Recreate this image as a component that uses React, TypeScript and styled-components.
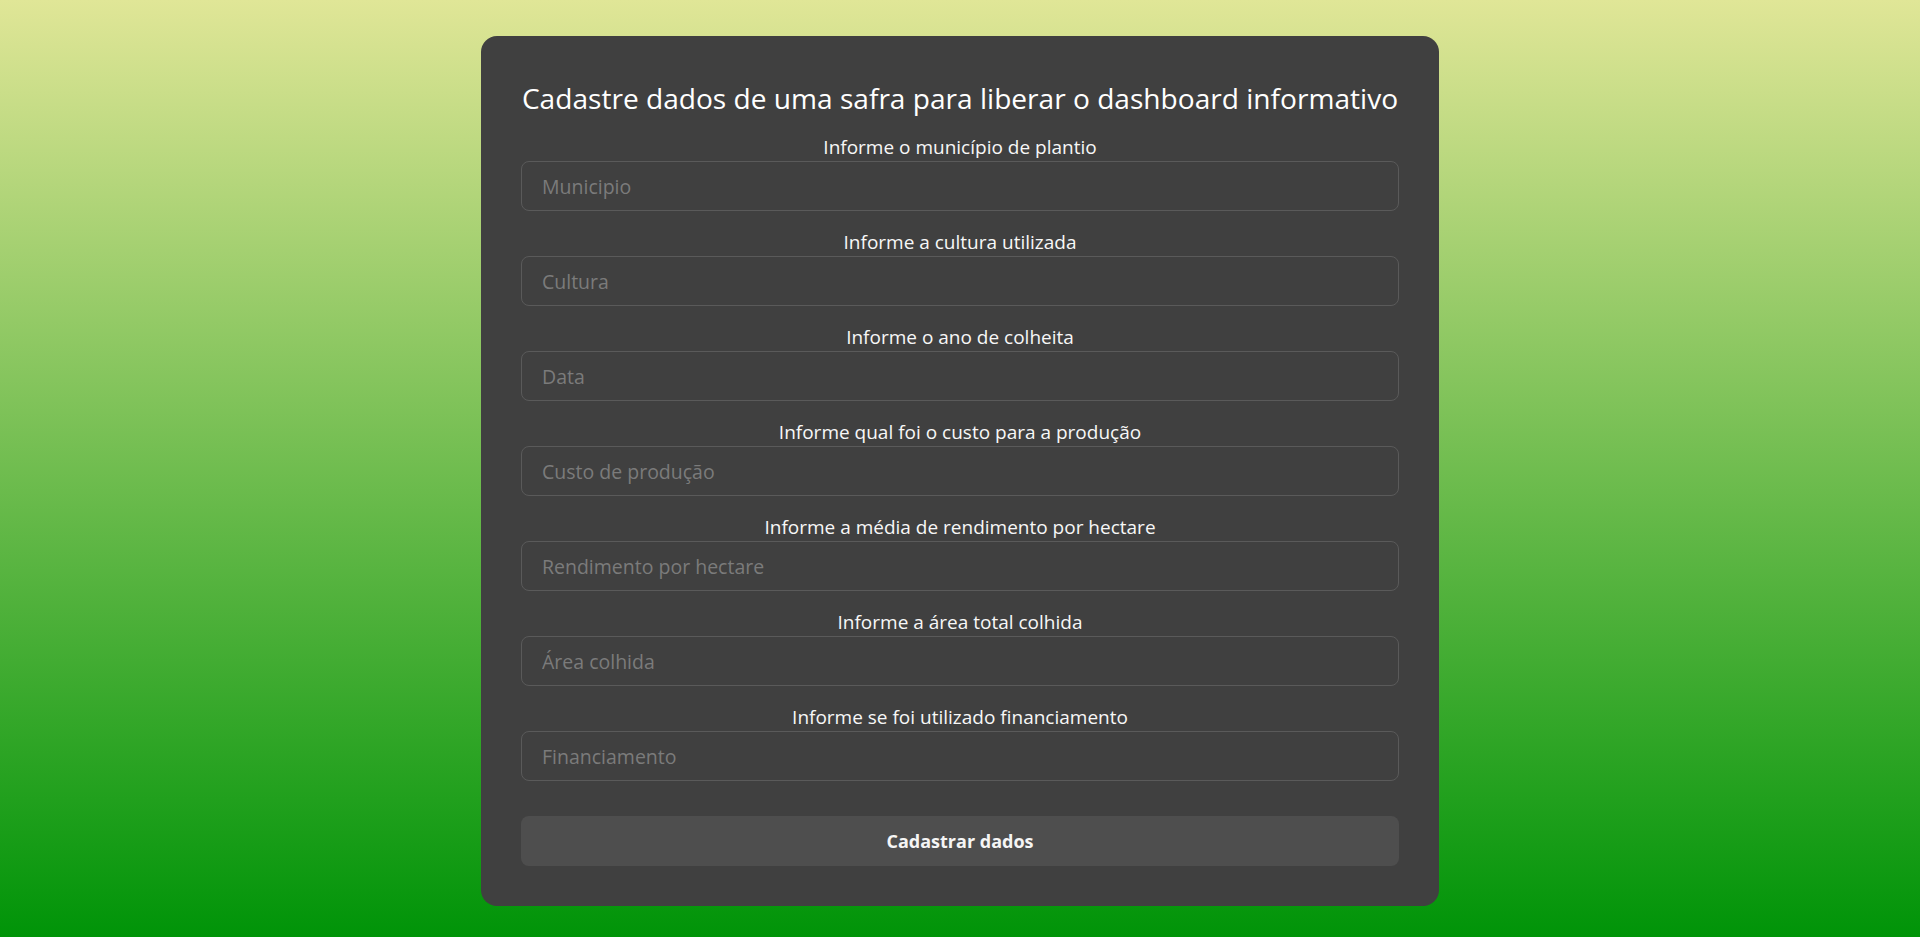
import React from "react";
import styled, { createGlobalStyle } from "styled-components";

const GlobalStyle = createGlobalStyle`
  html, body {
    margin: 0;
    padding: 0;
  }
  body {
    min-height: 100vh;
    background: linear-gradient(to bottom, #e0e697 0%, #009408 100%);
    background-attachment: fixed;
    font-family: "Open Sans", "Noto Sans", "Liberation Sans", sans-serif;
  }
  * { box-sizing: border-box; }
`;

const Page = styled.main`
  min-height: 100vh;
  display: flex;
  justify-content: center;
  align-items: flex-start;
  padding-top: 36px;
`;

const Card = styled.form`
  width: 958px;
  padding: 40px;
  background: #404040;
  border-radius: 16px;
  display: flex;
  flex-direction: column;
`;

const Title = styled.h1`
  margin: 2px 0 17px;
  font-size: 28.1px;
  line-height: 40px;
  font-weight: 400;
  color: #ffffff;
  text-align: center;
  white-space: nowrap;
`;

const FieldList = styled.div`
  display: flex;
  flex-direction: column;
  gap: 19px;
`;

const Field = styled.label`
  display: flex;
  flex-direction: column;
`;

const LabelText = styled.span`
  display: block;
  margin-bottom: 2px;
  font-size: 19px;
  line-height: 24px;
  color: #f7f7f7;
  text-align: center;
`;

const Input = styled.input`
  width: 100%;
  height: 50px;
  padding: 0 20px;
  border: 1px solid #5a5a5a;
  border-radius: 8px;
  background: transparent;
  color: #f0f0f0;
  font-family: inherit;
  font-size: 19.5px;
  outline: none;

  &::placeholder {
    color: #7b7b7b;
  }
`;

const SubmitButton = styled.button`
  margin-top: 35px;
  height: 50px;
  border: none;
  border-radius: 8px;
  background: #4e4e4e;
  color: #f5f5f5;
  font-family: inherit;
  font-size: 18px;
  font-weight: 700;
  cursor: pointer;
`;

const fields = [
  { label: "Informe o município de plantio", placeholder: "Municipio" },
  { label: "Informe a cultura utilizada", placeholder: "Cultura" },
  { label: "Informe o ano de colheita", placeholder: "Data" },
  { label: "Informe qual foi o custo para a produção", placeholder: "Custo de produção" },
  { label: "Informe a média de rendimento por hectare", placeholder: "Rendimento por hectare" },
  { label: "Informe a área total colhida", placeholder: "Área colhida" },
  { label: "Informe se foi utilizado financiamento", placeholder: "Financiamento" },
];

export default function App() {
  return (
    <>
      <GlobalStyle />
      <Page>
        <Card onSubmit={(e) => e.preventDefault()}>
          <Title>Cadastre dados de uma safra para liberar o dashboard informativo</Title>
          <FieldList>
            {fields.map((f) => (
              <Field key={f.placeholder}>
                <LabelText>{f.label}</LabelText>
                <Input type="text" placeholder={f.placeholder} />
              </Field>
            ))}
          </FieldList>
          <SubmitButton type="submit">Cadastrar dados</SubmitButton>
        </Card>
      </Page>
    </>
  );
}
